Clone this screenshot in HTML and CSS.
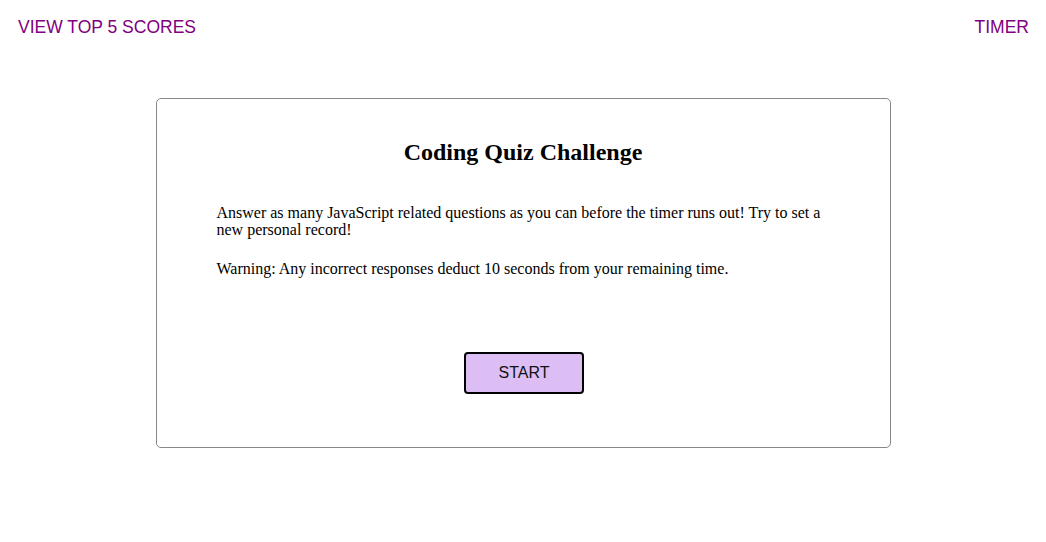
FILE: index.html
```html
<!DOCTYPE html>
<html>
<head>
<meta charset="utf-8">
<link rel="stylesheet" href="styles.css">
</head>
<body>
<header class="top">
  <a class="link" href="#">VIEW TOP 5 SCORES</a>
  <span class="timer">TIMER</span>
</header>
<main class="card">
  <h1 class="title">Coding Quiz Challenge</h1>
  <div class="intro">
    <p>Answer as many JavaScript related questions as you can before the timer runs out! Try to set a new personal record!</p>
    <p>Warning: Any incorrect responses deduct 10 seconds from your remaining time.</p>
  </div>
  <div class="actions">
    <button class="start">START</button>
  </div>
</main>
</body>
</html>
```
FILE: styles.css
```css
html, body { margin: 0; padding: 0; background: #fff; }
body { font-family: "Liberation Serif", "Times New Roman", serif; }
.top {
  display: flex;
  justify-content: space-between;
  align-items: center;
  padding: 17px 17px 0 18px;
  height: 21px;
  font-family: "Liberation Sans", Arial, sans-serif;
  font-size: 17.5px;
  line-height: 21px;
  color: #800080;
}
.link { color: #800080; text-decoration: none; }
.card {
  width: 733px;
  margin: 60px auto 0;
  border: 1px solid #888;
  border-radius: 5px;
  height: 348px;
  display: flex;
  flex-direction: column;
}
.title {
  margin: 40px 0 0;
  text-align: center;
  font-size: 24px;
  line-height: 27px;
  font-weight: bold;
}
.intro {
  padding: 0 60px;
  margin-top: 38px;
  font-size: 16px;
  line-height: 17px;
}
.intro p { margin: 0 0 22px; }
.actions {
  display: flex;
  justify-content: center;
  padding-left: 2px;
  margin-top: 53px;
}
.start {
  width: 120px;
  height: 42px;
  background: #dcbef5;
  border: 2px solid #000;
  border-radius: 4px;
  font-family: "Liberation Sans", Arial, sans-serif;
  font-size: 16px;
  color: #111;
}
```
